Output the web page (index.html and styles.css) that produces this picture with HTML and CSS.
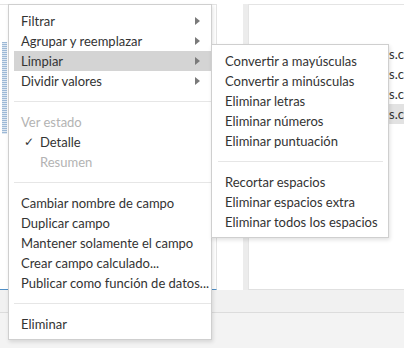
FILE: index.html
```html
<!DOCTYPE html>
<html lang="es">
<head>
    <meta charset="UTF-8">
    <title>Menú de campo</title>
    <link rel="stylesheet" href="styles.css">
</head>
<body>

    <!-- Background workspace -->
    <div class="workspace">
        <div class="panes">
            <div class="left-pane">
                <div class="field-stripe"></div>
            </div>
            <div class="pane-gap"></div>
            <div class="right-pane">
                <div class="data-row"><span>s.c</span></div>
                <div class="data-row"><span>s.c</span></div>
                <div class="data-row"><span>s.c</span></div>
                <div class="data-row selected"><span>s.c</span></div>
            </div>
        </div>
        <div class="bottom-bar"></div>
        <div class="bottom-area"></div>
    </div>

    <!-- Context menu -->
    <div class="menu main-menu">
        <div class="menu-item has-sub">Filtrar</div>
        <div class="menu-item has-sub">Agrupar y reemplazar</div>
        <div class="menu-item has-sub active">Limpiar</div>
        <div class="menu-item has-sub">Dividir valores</div>
        <div class="menu-sep"></div>
        <div class="menu-item disabled">Ver estado</div>
        <div class="menu-item checked indent">Detalle</div>
        <div class="menu-item disabled indent">Resumen</div>
        <div class="menu-sep"></div>
        <div class="menu-item">Cambiar nombre de campo</div>
        <div class="menu-item">Duplicar campo</div>
        <div class="menu-item">Mantener solamente el campo</div>
        <div class="menu-item">Crear campo calculado...</div>
        <div class="menu-item">Publicar como función de datos...</div>
        <div class="menu-sep"></div>
        <div class="menu-item">Eliminar</div>
    </div>

    <!-- Limpiar submenu -->
    <div class="menu sub-menu">
        <div class="menu-item">Convertir a mayúsculas</div>
        <div class="menu-item">Convertir a minúsculas</div>
        <div class="menu-item">Eliminar letras</div>
        <div class="menu-item">Eliminar números</div>
        <div class="menu-item">Eliminar puntuación</div>
        <div class="menu-sep"></div>
        <div class="menu-item">Recortar espacios</div>
        <div class="menu-item">Eliminar espacios extra</div>
        <div class="menu-item">Eliminar todos los espacios</div>
    </div>

</body>
</html>
```

FILE: styles.css
```css
/* Page + background workspace */
body {
    margin: 0;
    width: 404px;
    height: 348px;
    overflow: hidden;
    background: #fff;
    font-family: Lato, "Open Sans", sans-serif;
    font-size: 13px;
    color: #333;
    position: relative;
}

.workspace {
    display: flex;
    flex-direction: column;
    height: 348px;
}

.panes {
    display: flex;
    height: 290px;
    padding-top: 4px;
    box-sizing: border-box;
}

.left-pane {
    width: 217px;
    border-top: 1px solid #e4e4e4;
    border-right: 1px solid #e4e4e4;
    border-bottom: 1px solid #4f8fc7;
    padding-top: 37px;
    box-sizing: border-box;
}

.field-stripe {
    width: 5px;
    height: 92px;
    margin-left: 2px;
    background: repeating-linear-gradient(180deg, #9db9d6 0 1px, #dfe8f2 1px 2px);
}

.pane-gap {
    width: 26px;
    border-right: 5px solid #ececec;
}

.right-pane {
    flex: 1;
    border-top: 1px solid #e4e4e4;
    border-left: 1px solid #e4e4e4;
    border-bottom: 1px solid #e0e0e0;
    padding-top: 39px;
}

.data-row {
    height: 20px;
    line-height: 20px;
    display: flex;
    justify-content: flex-end;
    padding-right: 0;
    color: #333;
}

.data-row span {
    width: 15px;
    overflow: hidden;
    white-space: nowrap;
}

.data-row.selected {
    background: #e2e2e2;
}

.bottom-bar {
    height: 22px;
    background: #f1f1f1;
    border-bottom: 1px solid #dcdcdc;
}

.bottom-area {
    flex: 1;
    background: #f3f3f3;
}

/* Menus */
.menu {
    position: absolute;
    background: #fff;
    border: 1px solid #cfcfcf;
    box-shadow: 1px 2px 4px rgba(0, 0, 0, 0.12);
    box-sizing: border-box;
}

.main-menu {
    left: 8px;
    top: 4px;
    width: 204px;
    height: 336px;
    padding: 6px 0 0 5px;
}

.sub-menu {
    left: 211px;
    top: 44px;
    width: 178px;
    height: 194px;
    padding: 6px 5px 0 6px;
}

.menu-item {
    height: 20px;
    line-height: 20px;
    padding-left: 7px;
    white-space: nowrap;
    position: relative;
}

.menu-item.active {
    background: #d4d4d4;
}

.menu-item.disabled {
    color: #b3b3b3;
}

.menu-item.indent {
    padding-left: 26px;
}

.menu-item.has-sub::after {
    content: "";
    position: absolute;
    left: 181px;
    top: 6px;
    border-left: 5px solid #7a7a7a;
    border-top: 4px solid transparent;
    border-bottom: 4px solid transparent;
}

.menu-item.checked::before {
    content: "\2713";
    position: absolute;
    left: 10px;
    top: 0;
    font-family: "DejaVu Sans", sans-serif;
    font-size: 12px;
    color: #333;
}

.menu-sep {
    height: 1px;
    background: #e6e6e6;
    margin: 10px 0;
}
```
